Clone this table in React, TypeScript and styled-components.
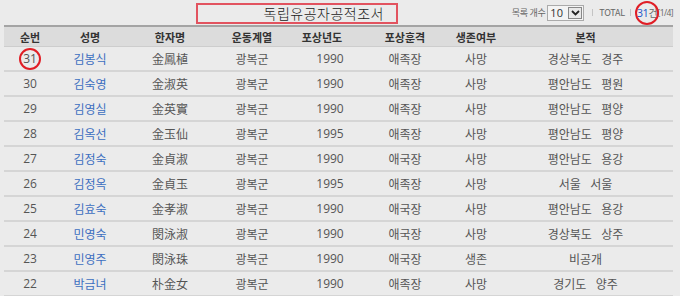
import React from 'react';
import styled, { createGlobalStyle } from 'styled-components';

const GlobalStyle = createGlobalStyle`
  html, body {
    margin: 0;
    padding: 0;
    background: #ebebeb;
    font-family: "Open Sans", "Noto Sans CJK KR", sans-serif;
    color: #555;
  }
`;

interface Row {
  no: number;
  name: string;
  hanja: string;
  line: string;
  year: number;
  medal: string;
  alive: string;
  origin: string;
}

const rows: Row[] = [
  { no: 31, name: '김봉식', hanja: '金鳳植', line: '광복군', year: 1990, medal: '애족장', alive: '사망', origin: '경상북도\u00a0\u00a0 경주' },
  { no: 30, name: '김숙영', hanja: '金淑英', line: '광복군', year: 1990, medal: '애족장', alive: '사망', origin: '평안남도\u00a0\u00a0 평원' },
  { no: 29, name: '김영실', hanja: '金英實', line: '광복군', year: 1990, medal: '애족장', alive: '사망', origin: '평안남도\u00a0\u00a0 평양' },
  { no: 28, name: '김옥선', hanja: '金玉仙', line: '광복군', year: 1995, medal: '애족장', alive: '사망', origin: '평안남도\u00a0\u00a0 평양' },
  { no: 27, name: '김정숙', hanja: '金貞淑', line: '광복군', year: 1990, medal: '애국장', alive: '사망', origin: '평안남도\u00a0\u00a0 용강' },
  { no: 26, name: '김정옥', hanja: '金貞玉', line: '광복군', year: 1995, medal: '애족장', alive: '사망', origin: '서울\u00a0\u00a0 서울' },
  { no: 25, name: '김효숙', hanja: '金孝淑', line: '광복군', year: 1990, medal: '애국장', alive: '사망', origin: '평안남도\u00a0\u00a0 용강' },
  { no: 24, name: '민영숙', hanja: '閔泳淑', line: '광복군', year: 1990, medal: '애국장', alive: '사망', origin: '경상북도\u00a0\u00a0 상주' },
  { no: 23, name: '민영주', hanja: '閔泳珠', line: '광복군', year: 1990, medal: '애국장', alive: '생존', origin: '비공개' },
  { no: 22, name: '박금녀', hanja: '朴金女', line: '광복군', year: 1990, medal: '애족장', alive: '사망', origin: '경기도\u00a0\u00a0 양주' },
];

const widths = [52, 68, 92, 72, 68, 98, 44, 175];
const headers = ['순번', '성명', '한자명', '운동계열', '포상년도', '포상훈격', '생존여부', '본적'];

const App: React.FC = () => (
  <>
    <GlobalStyle />
    <Page>
      <Toolbar>
        <TitleBox>독립유공자공적조서</TitleBox>
        <Controls>
          <Label>목록 개수</Label>
          <SelectBox>
            <SelectValue>10</SelectValue>
            <SelectArrow>
              <svg width="9" height="6" viewBox="0 0 9 6">
                <path d="M1 1 L4.5 4.5 L8 1" fill="none" stroke="#222" strokeWidth="1.8" />
              </svg>
            </SelectArrow>
          </SelectBox>
          <Divider />
          <Label>TOTAL</Label>
          <Divider />
          <TotalCount $size={24}>
            <Count>31</Count>건
          </TotalCount>
          <Pages>[1/4]</Pages>
        </Controls>
      </Toolbar>
      <Table>
        <colgroup>
          {widths.map((w, i) => (
            <col key={i} style={{ width: w }} />
          ))}
        </colgroup>
        <thead>
          <tr>
            {headers.map((h) => (
              <Th key={h}>{h}</Th>
            ))}
          </tr>
        </thead>
        <tbody>
          {rows.map((r, i) => (
            <tr key={r.no}>
              <Td>{i === 0 ? <Circled $size={22}>{r.no}</Circled> : r.no}</Td>
              <Td>
                <NameLink>{r.name}</NameLink>
              </Td>
              <Td>{r.hanja}</Td>
              <Td>{r.line}</Td>
              <Td $shift={16}>{r.year}</Td>
              <Td>{r.medal}</Td>
              <Td>{r.alive}</Td>
              <Td>{r.origin}</Td>
            </tr>
          ))}
        </tbody>
      </Table>
    </Page>
  </>
);

const Page = styled.div`
  width: 680px;
  height: 296px;
  overflow: hidden;
  padding: 0 7px 0 4px;
  box-sizing: border-box;
`;

const Toolbar = styled.div`
  display: flex;
  align-items: center;
  height: 25px;
  padding-left: 192px;
`;

const TitleBox = styled.div`
  width: 186px;
  height: 17px;
  margin-top: 2px;
  padding-right: 12px;
  box-sizing: content-box;
  border: 2px solid #e2535f;
  font-family: "Noto Sans CJK KR", sans-serif;
  font-size: 14px;
  font-weight: 300;
  line-height: 17px;
  letter-spacing: 0.5px;
  color: #222;
  text-align: right;
`;

const Controls = styled.div`
  display: flex;
  align-items: center;
  margin-left: auto;
  color: #555;
  white-space: nowrap;
`;

const Label = styled.span`
  font-family: "Noto Sans CJK KR", sans-serif;
  font-size: 9px;
  letter-spacing: -0.3px;
  color: #666;
  margin-right: 2px;
`;

const SelectBox = styled.span`
  display: inline-flex;
  align-items: center;
  justify-content: space-between;
  width: 35px;
  height: 14px;
  margin: 1px 5px 0 0;
  background: #f4f4f4;
  border: 1px solid #aaa;
  box-sizing: content-box;
`;

const SelectValue = styled.span`
  font-size: 11px;
  color: #333;
  padding-left: 2px;
  line-height: 14px;
`;

const SelectArrow = styled.span`
  display: flex;
  align-items: center;
  justify-content: center;
  width: 14px;
  height: 12px;
  margin-right: 1px;
  border: 1px solid #888;
  background: #e8e8e8;
  box-sizing: border-box;
`;

const Divider = styled.span`
  width: 1px;
  height: 7px;
  background: #c4c4c4;
  margin: 0 6px 0 3px;
`;

const Circled = styled.span<{ $size: number }>`
  position: relative;
  display: inline-block;
  &::after {
    content: '';
    position: absolute;
    left: 50%;
    top: 50%;
    width: ${(p) => p.$size - 4}px;
    height: ${(p) => p.$size - 4}px;
    margin: ${(p) => -p.$size / 2}px 0 0 ${(p) => -p.$size / 2}px;
    border: 2px solid #e01e26;
    border-radius: 50%;
  }
`;

const TotalCount = styled(Circled)`
  font-family: "Noto Sans CJK KR", sans-serif;
  font-size: 10px;
  line-height: 14px;
  color: #666;
`;

const Count = styled.span`
  font-family: "Open Sans", sans-serif;
  font-size: 11px;
  color: #2255cc;
  letter-spacing: -0.5px;
`;

const Pages = styled.span`
  font-size: 8.5px;
  letter-spacing: -0.6px;
  color: #666;
`;

const Table = styled.table`
  width: 669px;
  table-layout: fixed;
  border-collapse: collapse;
  border-top: 2px solid #a4a4a4;
`;

const Th = styled.th`
  height: 19px;
  padding: 0;
  background: #dcdcdc;
  border-bottom: 1px solid #cdcdcd;
  font-family: "Noto Sans CJK KR", sans-serif;
  font-size: 11px;
  font-weight: 700;
  color: #333;
  text-align: center;
  white-space: nowrap;
`;

const Td = styled.td<{ $shift?: number }>`
  height: 23px;
  padding: 0 0 0 ${(p) => p.$shift ?? 0}px;
  border-bottom: 2px solid #d5d5d5;
  font-size: 12px;
  color: #555;
  text-align: center;
  white-space: nowrap;
`;

const NameLink = styled.span`
  color: #3d6fc0;
`;

export default App;
